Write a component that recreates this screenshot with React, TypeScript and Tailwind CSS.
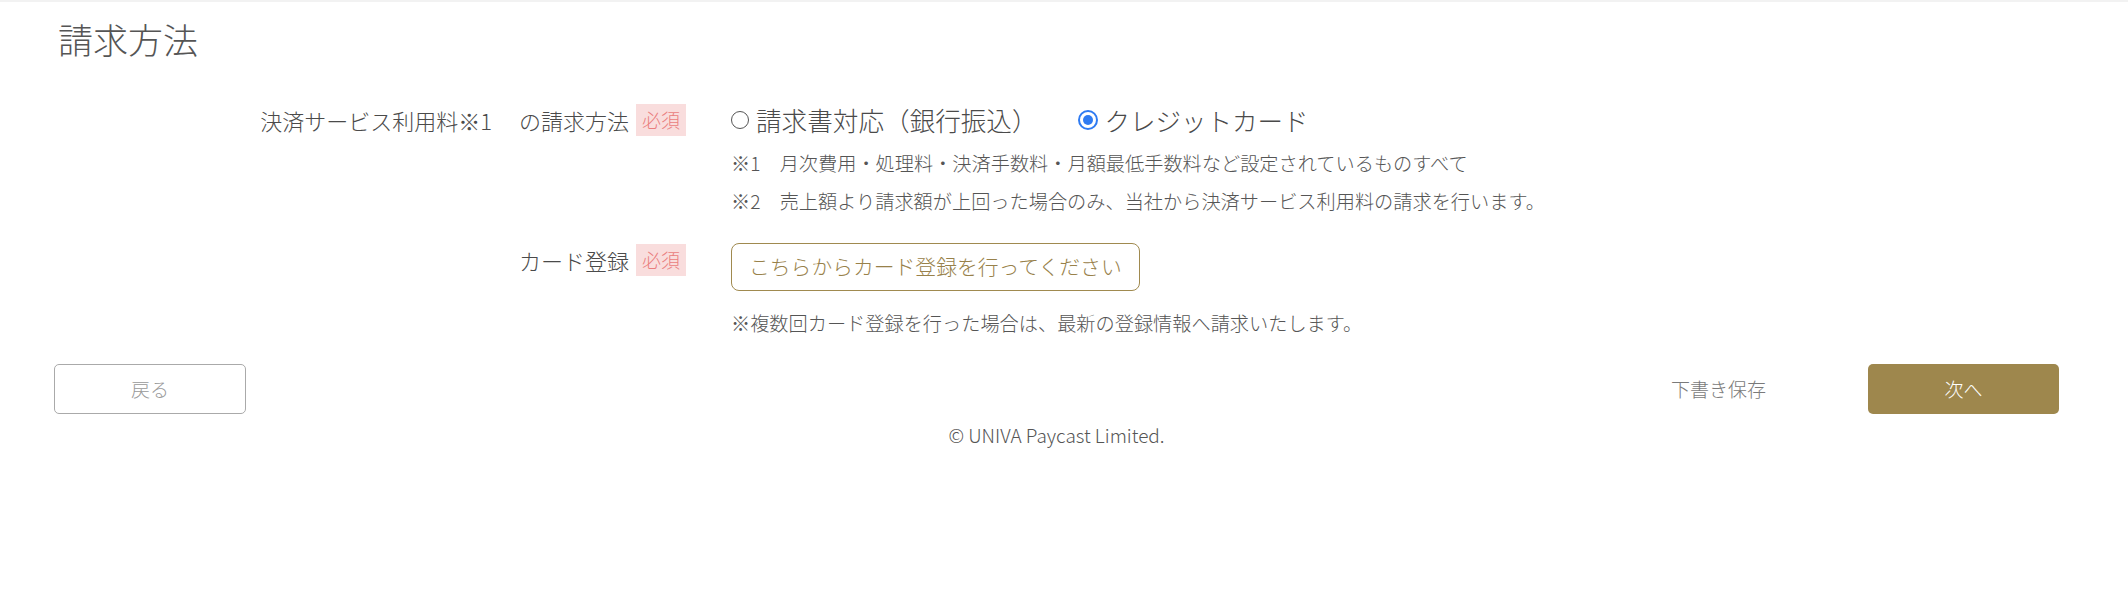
import React from "react";

function Badge() {
  return (
    <span className="inline-flex h-[32px] items-center bg-[#f9dddd] px-[6px] text-[19px] leading-[32px] text-[#ea7d7d]">
      必須
    </span>
  );
}

export default function App() {
  return (
    <div
      className="h-[604px] w-[2128px] border-t-2 border-[#f2f2f2] bg-white font-light text-[#4a4a4a]"
      style={{ fontFamily: '"Noto Sans CJK JP", "Noto Sans", sans-serif' }}
    >
      <div className="pl-[54px] pr-[69px]">
        <h2 className="pl-[4px] pt-[19px] text-[35px] font-light leading-[35px] text-[#555]">請求方法</h2>

        <div className="mt-[48px] grid grid-cols-[632px_1fr] gap-x-[45px]">
          {/* Row 1 */}
          <div className="flex h-[32px] items-center justify-end gap-[7px]">
            <span className="text-[22px] leading-[32px]">決済サービス利用料※1　&nbsp;の請求方法</span>
            <Badge />
          </div>
          <div>
            <div className="flex h-[32px] items-center">
              <label className="flex items-center gap-[7px]">
                <span className="h-[18px] w-[18px] rounded-full border border-[#555]" />
                <span className="text-[25.6px] leading-[32px]">請求書対応（銀行振込）</span>
              </label>
              <label className="ml-[40px] flex items-center gap-[7px]">
                <span className="flex h-[20px] w-[20px] items-center justify-center rounded-full border-2 border-[#2f7bf2]">
                  <span className="h-[10px] w-[10px] rounded-full bg-[#2f7bf2]" />
                </span>
                <span className="text-[25.5px] leading-[32px]">クレジットカード</span>
              </label>
            </div>
            <div className="mt-[8px] text-[19.2px] leading-[38px] text-[#555]">
              <p>※1　月次費用・処理料・決済手数料・月額最低手数料など設定されているものすべて</p>
              <p>※2　売上額より請求額が上回った場合のみ、当社から決済サービス利用料の請求を行います。</p>
            </div>
          </div>

          {/* Row 2 */}
          <div className="mt-[24px] flex h-[32px] items-center justify-end gap-[7px]">
            <span className="text-[22px] leading-[32px]">カード登録</span>
            <Badge />
          </div>
          <div className="mt-[23px]">
            <button className="flex h-[48px] items-center rounded-[8px] border border-[#a08a4f] bg-white px-[17px] text-[20.8px] font-light text-[#98814a]">
              こちらからカード登録を行ってください
            </button>
            <p className="mt-[13px] text-[19.2px] leading-[38px] text-[#555]">
              ※複数回カード登録を行った場合は、最新の登録情報へ請求いたします。
            </p>
          </div>
        </div>

        <div className="mt-[22px] flex items-center justify-between">
          <button className="flex h-[50px] w-[192px] items-center justify-center rounded-[5px] border border-[#aaa] bg-white text-[19px] font-light text-[#999]">
            戻る
          </button>
          <div className="flex items-center">
            <span className="mr-[102px] text-[19px] text-[#7a7a7a]">下書き保存</span>
            <button className="flex h-[50px] w-[191px] items-center justify-center rounded-[5px] bg-[#9e874d] text-[19px] font-light text-white">
              次へ
            </button>
          </div>
        </div>

        <p className="mt-[8px] text-center text-[19px] leading-[26px] text-[#555]">© UNIVA Paycast Limited.</p>
      </div>
    </div>
  );
}
